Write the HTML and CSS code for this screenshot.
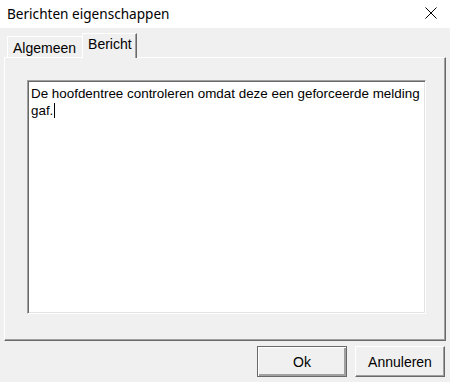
FILE: index.html
```html
<!DOCTYPE html>
<html lang="nl">
<head>
    <meta charset="UTF-8">
    <meta name="viewport" content="width=device-width, initial-scale=1.0">
    <title>Berichten eigenschappen</title>
    <link rel="stylesheet" href="styles.css">
</head>
<body>
    <div class="window">
        <div class="titlebar">
            <span class="title">Berichten eigenschappen</span>
            <span class="close">
                <svg width="12" height="12" viewBox="0 0 12 12">
                    <path d="M0.5 0.5 L11.5 11.5 M11.5 0.5 L0.5 11.5" stroke="#000" stroke-width="1" fill="none"/>
                </svg>
            </span>
        </div>
        <div class="content">
            <div class="tabs">
                <div class="tab">Algemeen</div>
                <div class="tab active">Bericht</div>
            </div>
            <div class="pane">
                <div class="memo">De hoofdentree controleren omdat deze een geforceerde melding gaf.<span class="caret"></span></div>
            </div>
            <div class="buttons">
                <button class="btn default">Ok</button>
                <button class="btn">Annuleren</button>
            </div>
        </div>
    </div>
</body>
</html>
```

FILE: styles.css
```css
* { box-sizing: border-box; }
body { margin: 0; padding: 0; background-color: #f0f0f0; font-family: 'Liberation Sans', Arial, sans-serif; color: #000; }

.window { width: 450px; height: 382px; display: flex; flex-direction: column; }

/* Title bar */
.titlebar { height: 28px; background: #fff; display: flex; align-items: center; justify-content: space-between; padding: 0 13px 0 7px; }
.title { font-family: 'Noto Sans', sans-serif; font-size: 13.6px; margin-top: -2px; }
.close { display: flex; margin-top: -3px; }

.content { flex: 1; display: flex; flex-direction: column; padding: 0 4px; }

/* Tabs */
.tabs { display: flex; align-items: flex-end; height: 29px; padding-left: 3px; }
.tab { font-size: 14px; height: 21px; padding: 3px 6px 0 5px; border-top: 1px solid #fff; border-left: 1px solid #fff; }
.tab.active { height: 25px; padding: 2px 4px 0 5px; margin-bottom: -1px; background: #f0f0f0; position: relative; z-index: 1; border-right: 1px solid #696969; box-shadow: inset -1px 0 0 #a0a0a0; }

.pane { height: 284px; border: 1px solid; border-color: #fff #696969 #696969 #fff; box-shadow: inset -1px -1px 0 #a0a0a0; padding: 22px 19px 0 22px; }

.memo { height: 234px; background: #fff; border: 1px solid; border-color: #a0a0a0 #fff #fff #a0a0a0; box-shadow: inset 1px 1px 0 #696969, inset -1px -1px 0 #e3e3e3; padding: 4px 2px 0 3px; font-size: 13.4px; line-height: 17px; }
.caret { display: inline-block; width: 1px; height: 15px; background: #000; vertical-align: -3px; margin-left: 1px; }

/* Buttons */
.buttons { display: flex; justify-content: flex-end; gap: 8px; padding-top: 5px; padding-right: 1px; }
.btn { width: 90px; height: 31px; font-family: 'Liberation Sans', Arial, sans-serif; font-size: 14px; background: #f0f0f0; border: 1px solid; border-color: #fff #696969 #696969 #fff; box-shadow: inset -1px -1px 0 #a0a0a0; padding: 0; color: #000; }
.btn.default { outline: 1px solid #696969; outline-offset: -1px; border-color: #fff #696969 #696969 #fff; box-shadow: inset 1px 1px 0 #fff, inset -2px -2px 0 #a0a0a0; }
```
